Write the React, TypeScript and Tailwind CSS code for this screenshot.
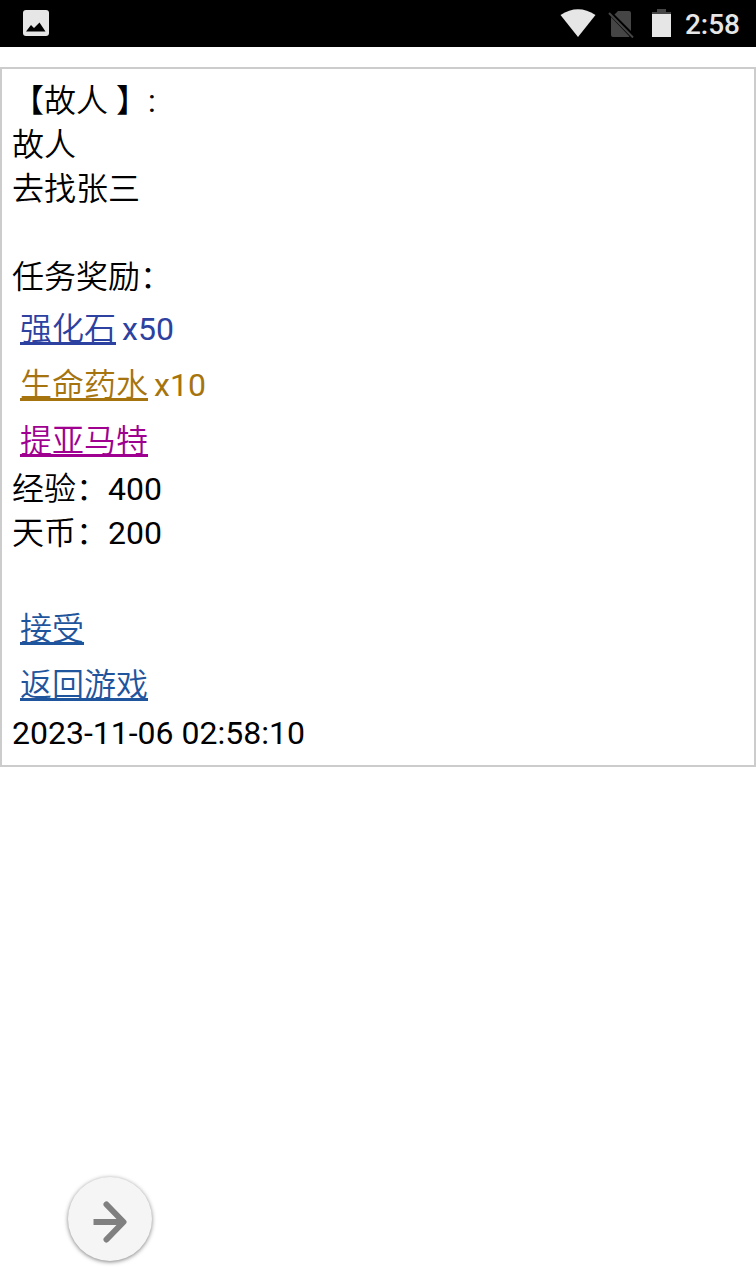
import type { ReactNode } from "react";

function StatusBar() {
  return (
    <header className="flex h-[47px] items-center justify-between bg-black pr-4 pl-[23px] text-[#e6e6e6]">
      <svg className="mb-0.5 h-[26px] w-[26px]" viewBox="0 0 26 26" role="img" aria-label="图片通知">
        <rect width="26" height="26" rx="3" fill="currentColor" />
        <path d="M3 21.500 8 15 11 18 16.500 12.500 22.500 21.500Z" fill="#000" />
      </svg>
      <div className="flex items-center">
        <svg className="mr-3 mb-0.5 h-7 w-9" viewBox="0 0 36 28" aria-hidden="true">
          <path d="M.5 6Q18-5.500 35.500 6L18 28Z" fill="currentColor" />
        </svg>
        <svg className="mr-[17px] h-7 w-[26px]" viewBox="0 0 26 28" aria-hidden="true">
          <path d="M10 1H21Q23 1 23 3V21L6.500 4.500Z M3 7 21.500 26.500 21 27H5Q3 27 3 25Z" fill="#454545" />
          <path d="M1 3 25 27.500" stroke="#454545" strokeWidth="2" />
        </svg>
        <svg className="mr-3.5 mb-0.5 h-7 w-5" viewBox="0 0 20 28" aria-hidden="true">
          <path d="M6 0H15V3H20V5H1V3H6Z" fill="#454545" />
          <path d="M1 5H20V28H1Z" fill="currentColor" />
        </svg>
        <time className="mt-0.5 text-[28px] leading-8 font-medium">2:58</time>
      </div>
    </header>
  );
}

function LinkRow({ color, label, children }: { color: string; label: string; children?: ReactNode }) {
  return (
    <div className={`px-2 pt-1 leading-[52px] ${color}`}>
      <a href="#" className="font-[350] underline decoration-[3px] underline-offset-2 [text-decoration-skip-ink:none]">
        {label}
      </a>
      {children && <span className="ml-1.5">{children}</span>}
    </div>
  );
}

export default function App() {
  return (
    <div className="min-h-screen bg-white font-['Roboto','Noto_Sans_CJK_SC',sans-serif] text-black" lang="zh-CN">
      <StatusBar />
      <main className="mt-5 border-2 border-[#cccccc] p-2.5 text-[32px] leading-[44px]">
        <p><span className="font-[350]">【故人</span> 】:</p>
        <p className="font-[350]">故人</p>
        <p className="font-[350]">去找张三</p>
        <section className="mt-11">
          <h1 className="font-[350]">任务奖励：</h1>
          <LinkRow color="text-[#2c41a0]" label="强化石">x50</LinkRow>
          <LinkRow color="text-[#a6740f]" label="生命药水">x10</LinkRow>
          <LinkRow color="text-[#a00090]" label="提亚马特" />
          <p><span className="font-[350]">经验：</span>400</p>
          <p><span className="font-[350]">天币：</span>200</p>
        </section>
        <nav className="mt-11">
          <LinkRow color="text-[#1f559c]" label="接受" />
          <LinkRow color="text-[#1f559c]" label="返回游戏" />
        </nav>
        <time className="block">2023-11-06 02:58:10</time>
      </main>
      <button
        type="button"
        aria-label="前进"
        className="fixed bottom-5 left-[68px] flex size-[84px] items-center justify-center rounded-full bg-[#f5f5f5] shadow-[0_1px_4px_rgba(0,0,0,0.5)]"
      >
        <svg className="mt-1.5 h-[42px] w-9" viewBox="0 0 36 42" fill="none" stroke="#808080" strokeWidth="6" strokeLinejoin="round" aria-hidden="true">
          <path d="M1.500 21H31" />
          <path d="M14.500 3.500 31.500 21 14.500 38.500" strokeLinecap="round" />
        </svg>
      </button>
    </div>
  );
}
